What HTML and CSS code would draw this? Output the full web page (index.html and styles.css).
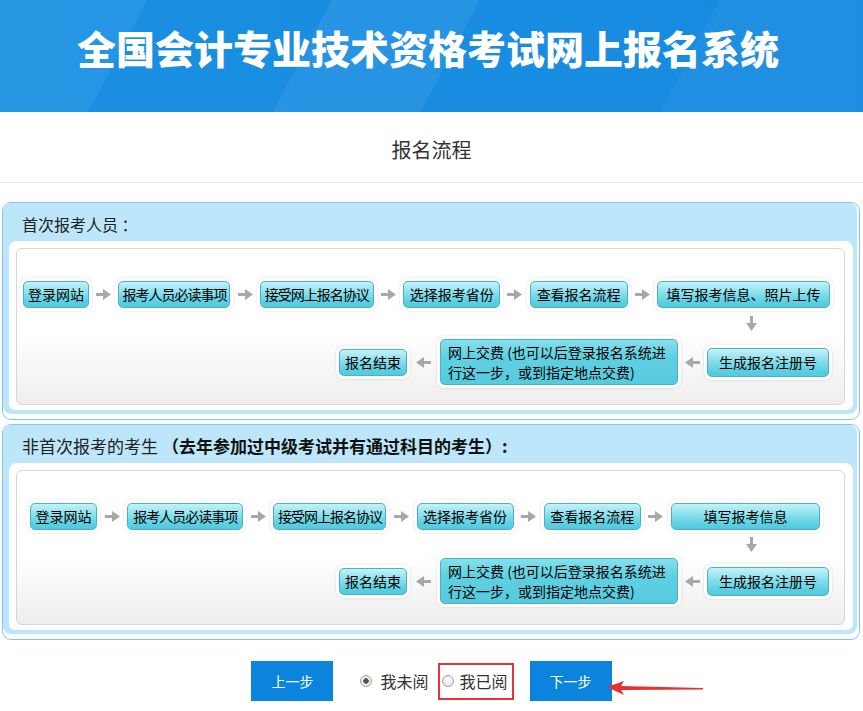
FILE: index.html
```html
<!DOCTYPE html>
<html lang="zh-CN">
<head>
<meta charset="utf-8">
<title>全国会计专业技术资格考试网上报名系统</title>
<link rel="stylesheet" href="styles.css">
</head>
<body>
<header class="top">
  <h1 class="top-title">全国会计专业技术资格考试网上报名系统</h1>
</header>

<div class="section-title">报名流程</div>

<main class="panels">
  <section class="panel">
    <div class="panel-in">
      <div class="panel-head">首次报考人员 ：</div>
      <div class="panel-body">
        <div class="flow">
          <div class="row row-a">
            <div class="node w66">登录网站</div>
            <span class="arr"><svg class="arr-r" viewBox="0 0 15 11"><path d="M0 4h8v3H0z M7 0l8 5.5L7 11z"/></svg></span>
            <div class="node w112 tight">报考人员必读事项</div>
            <span class="arr"><svg class="arr-r" viewBox="0 0 15 11"><path d="M0 4h8v3H0z M7 0l8 5.5L7 11z"/></svg></span>
            <div class="node w114 tight">接受网上报名协议</div>
            <span class="arr"><svg class="arr-r" viewBox="0 0 15 11"><path d="M0 4h8v3H0z M7 0l8 5.5L7 11z"/></svg></span>
            <div class="node w97">选择报考省份</div>
            <span class="arr"><svg class="arr-r" viewBox="0 0 15 11"><path d="M0 4h8v3H0z M7 0l8 5.5L7 11z"/></svg></span>
            <div class="node w98">查看报名流程</div>
            <span class="arr"><svg class="arr-r" viewBox="0 0 15 11"><path d="M0 4h8v3H0z M7 0l8 5.5L7 11z"/></svg></span>
            <div class="node w173">填写报考信息、照片上传</div>
          </div>
          <div class="down"><svg class="arr-d" viewBox="0 0 11 15"><path d="M4 0h3v8H4z M0 7h11l-5.5 8z"/></svg></div>
          <div class="row row-b">
            <div class="node w68">报名结束</div>
            <span class="arr-cell c33"><svg class="arr-r" viewBox="0 0 15 11"><path d="M15 4H7v3h8z M8 0L0 5.5 8 11z"/></svg></span>
            <div class="node pay">网上交费 (也可以后登录报名系统进<br>行这一步，或到指定地点交费)</div>
            <span class="arr-cell c29"><svg class="arr-r" viewBox="0 0 15 11"><path d="M15 4H7v3h8z M8 0L0 5.5 8 11z"/></svg></span>
            <div class="node w122 tall">生成报名注册号</div>
          </div>
        </div>
      </div>
    </div>
  </section>

  <section class="panel">
    <div class="panel-in">
      <div class="panel-head head-lg">非首次报考的考生 <strong>（去年参加过中级考试并有通过科目的考生）:</strong></div>
      <div class="panel-body">
        <div class="flow flow-b">
          <div class="row row-c">
            <div class="node w67">登录网站</div>
            <span class="arr"><svg class="arr-r" viewBox="0 0 15 11"><path d="M0 4h8v3H0z M7 0l8 5.5L7 11z"/></svg></span>
            <div class="node w116 tight">报考人员必读事项</div>
            <span class="arr"><svg class="arr-r" viewBox="0 0 15 11"><path d="M0 4h8v3H0z M7 0l8 5.5L7 11z"/></svg></span>
            <div class="node w113 tight">接受网上报名协议</div>
            <span class="arr"><svg class="arr-r" viewBox="0 0 15 11"><path d="M0 4h8v3H0z M7 0l8 5.5L7 11z"/></svg></span>
            <div class="node w97">选择报考省份</div>
            <span class="arr"><svg class="arr-r" viewBox="0 0 15 11"><path d="M0 4h8v3H0z M7 0l8 5.5L7 11z"/></svg></span>
            <div class="node w97">查看报名流程</div>
            <span class="arr"><svg class="arr-r" viewBox="0 0 15 11"><path d="M0 4h8v3H0z M7 0l8 5.5L7 11z"/></svg></span>
            <div class="node w149">填写报考信息</div>
          </div>
          <div class="down"><svg class="arr-d" viewBox="0 0 11 15"><path d="M4 0h3v8H4z M0 7h11l-5.5 8z"/></svg></div>
          <div class="row row-b">
            <div class="node w68">报名结束</div>
            <span class="arr-cell c33"><svg class="arr-r" viewBox="0 0 15 11"><path d="M15 4H7v3h8z M8 0L0 5.5 8 11z"/></svg></span>
            <div class="node pay">网上交费 (也可以后登录报名系统进<br>行这一步，或到指定地点交费)</div>
            <span class="arr-cell c29"><svg class="arr-r" viewBox="0 0 15 11"><path d="M15 4H7v3h8z M8 0L0 5.5 8 11z"/></svg></span>
            <div class="node w122 tall">生成报名注册号</div>
          </div>
        </div>
      </div>
    </div>
  </section>
</main>

<div class="actions">
  <button class="btn" type="button">上一步</button>
  <label class="choice">
    <input class="radio" type="radio" name="read" checked>
    <span class="choice-text">我未阅</span>
  </label>
  <label class="choice marked">
    <input class="radio" type="radio" name="read">
    <span class="choice-text">我已阅</span>
  </label>
  <div class="next-wrap">
    <button class="btn" type="button">下一步</button>
    <svg class="red-arrow" viewBox="0 0 97 16"><polygon points="0,7 17,1 14,6 96,8 96,9.5 14,10 17,15"/></svg>
  </div>
</div>
</body>
</html>
```

FILE: styles.css
```css
* { box-sizing: border-box; }

body {
  margin: 0;
  background: #fff;
  color: #333;
  font-family: "Noto Sans CJK SC", "Noto Sans", sans-serif;
}

.top {
  height: 112px;
  background:
    linear-gradient(118deg, rgba(255,255,255,0.05) 0 16%, transparent 16% 36%, rgba(255,255,255,0.06) 36% 52%, transparent 52% 78%, rgba(255,255,255,0.04) 78%),
    linear-gradient(90deg, #1b90e2, #168ae0);
}

.top-title {
  margin: 0;
  padding: 24px 7px 0 0;
  text-align: center;
  color: #fff;
  font-size: 39px;
  line-height: 46px;
  font-weight: 900;
}

.section-title {
  padding: 28px 0 22px;
  text-align: center;
  font-size: 20px;
  line-height: 20px;
  color: #333;
  border-bottom: 1px solid #e8e8e8;
}

.panels {
  display: flex;
  flex-direction: column;
  gap: 4px;
  padding: 19px 3px 0 2px;
}

.panel {
  border: 1px solid #86c6ec;
  border-radius: 9px;
  background: #fff;
  padding: 0 2px 5px 0;
}

.panel-in {
  background: #bde6fa;
  border-radius: 8px;
  padding: 0 4px 4px 6px;
}

.panel-head {
  height: 38px;
  display: flex;
  align-items: center;
  padding: 3px 0 0 13px;
  font-size: 16px;
  color: #222;
}

.head-lg { font-size: 17px; }
.head-lg strong { font-weight: 700; color: #111; margin-left: 4px; }

.panel-body {
  background: #fff;
  border-radius: 8px 8px 6px 6px;
  padding: 7px 8px 5px 7px;
}

.flow {
  border: 1px solid #d6d6d6;
  border-radius: 6px;
  background: linear-gradient(#fff 55%, #eeeeee);
  padding: 31px 0 19px;
}

.row {
  display: flex;
  align-items: center;
}

.row-a { height: 28px; padding: 0 14px 0 6px; }
.row-c { height: 28px; padding: 0 24px 0 13px; }
.row-b { height: 46px; justify-content: flex-end; padding-right: 15px; }

.arr {
  flex: 1;
  display: flex;
  justify-content: center;
  align-items: center;
}

.arr-cell {
  display: flex;
  justify-content: center;
  align-items: center;
}
.c33 { width: 33px; }
.c29 { width: 29px; }

.arr-r { width: 15px; height: 11px; fill: #a8a8a8; display: block; }

.down {
  height: 31px;
  display: flex;
  justify-content: flex-end;
  align-items: center;
  padding-right: 87px;
}
.flow-b .down { height: 28px; }
.flow-b { padding-bottom: 20px; }

.arr-d { width: 11px; height: 15px; fill: #a8a8a8; display: block; }

.node {
  height: 27px;
  display: flex;
  align-items: center;
  justify-content: center;
  flex: none;
  border: 1px solid #45b4c9;
  border-radius: 5px;
  background: linear-gradient(#c6f1f8, #86dfeb 45%, #5ccfe1 80%, #52cadd);
  box-shadow: 0 0 0 3px #fff, 0 0 3px 3px rgba(0,0,0,0.13);
  font-size: 14px;
  color: #000;
  white-space: nowrap;
}

.tight { letter-spacing: -1px; }
.tall { height: 29px; }

.w66 { width: 66px; }
.w67 { width: 67px; }
.w68 { width: 68px; }
.w97 { width: 97px; }
.w98 { width: 98px; }
.w112 { width: 112px; }
.w113 { width: 113px; }
.w114 { width: 114px; }
.w116 { width: 116px; }
.w122 { width: 122px; }
.w149 { width: 149px; }
.w173 { width: 173px; }

.pay {
  width: 238px;
  height: 46px;
  display: block;
  padding: 2px 0 0 7px;
  line-height: 20px;
  text-align: left;
  background: linear-gradient(#86dfeb, #5fd0e2 40%, #55cbdd);
}

.actions {
  display: flex;
  justify-content: center;
  align-items: center;
  margin-top: 21px;
}

.btn {
  width: 82px;
  height: 40px;
  border: 0;
  margin: 0;
  background: #0b84de;
  color: #fff;
  font-family: inherit;
  font-size: 14px;
  padding: 0;
}

.choice {
  display: flex;
  align-items: center;
  margin-left: 27px;
  font-size: 16px;
  color: #333;
}

.choice-text { margin-left: 8px; line-height: 20px; }

.marked {
  margin-left: 9px;
  width: 76px;
  height: 37px;
  border: 2px solid #e53535;
  padding-left: 2px;
}
.marked .choice-text { margin-left: 6px; }

.radio {
  appearance: none;
  -webkit-appearance: none;
  width: 12px;
  height: 12px;
  margin: 0;
  border-radius: 50%;
  border: 1px solid #a4a4a4;
  background: radial-gradient(circle at 50% 40%, #fff, #dcdcdc);
}
.radio:checked {
  background: radial-gradient(circle, #555 0 2.5px, #f2f2f2 3px, #d8d8d8);
}

.next-wrap {
  position: relative;
  margin-left: 16px;
}

.red-arrow {
  position: absolute;
  left: 77px;
  top: 19px;
  width: 97px;
  height: 16px;
  fill: #e8302f;
}
```
